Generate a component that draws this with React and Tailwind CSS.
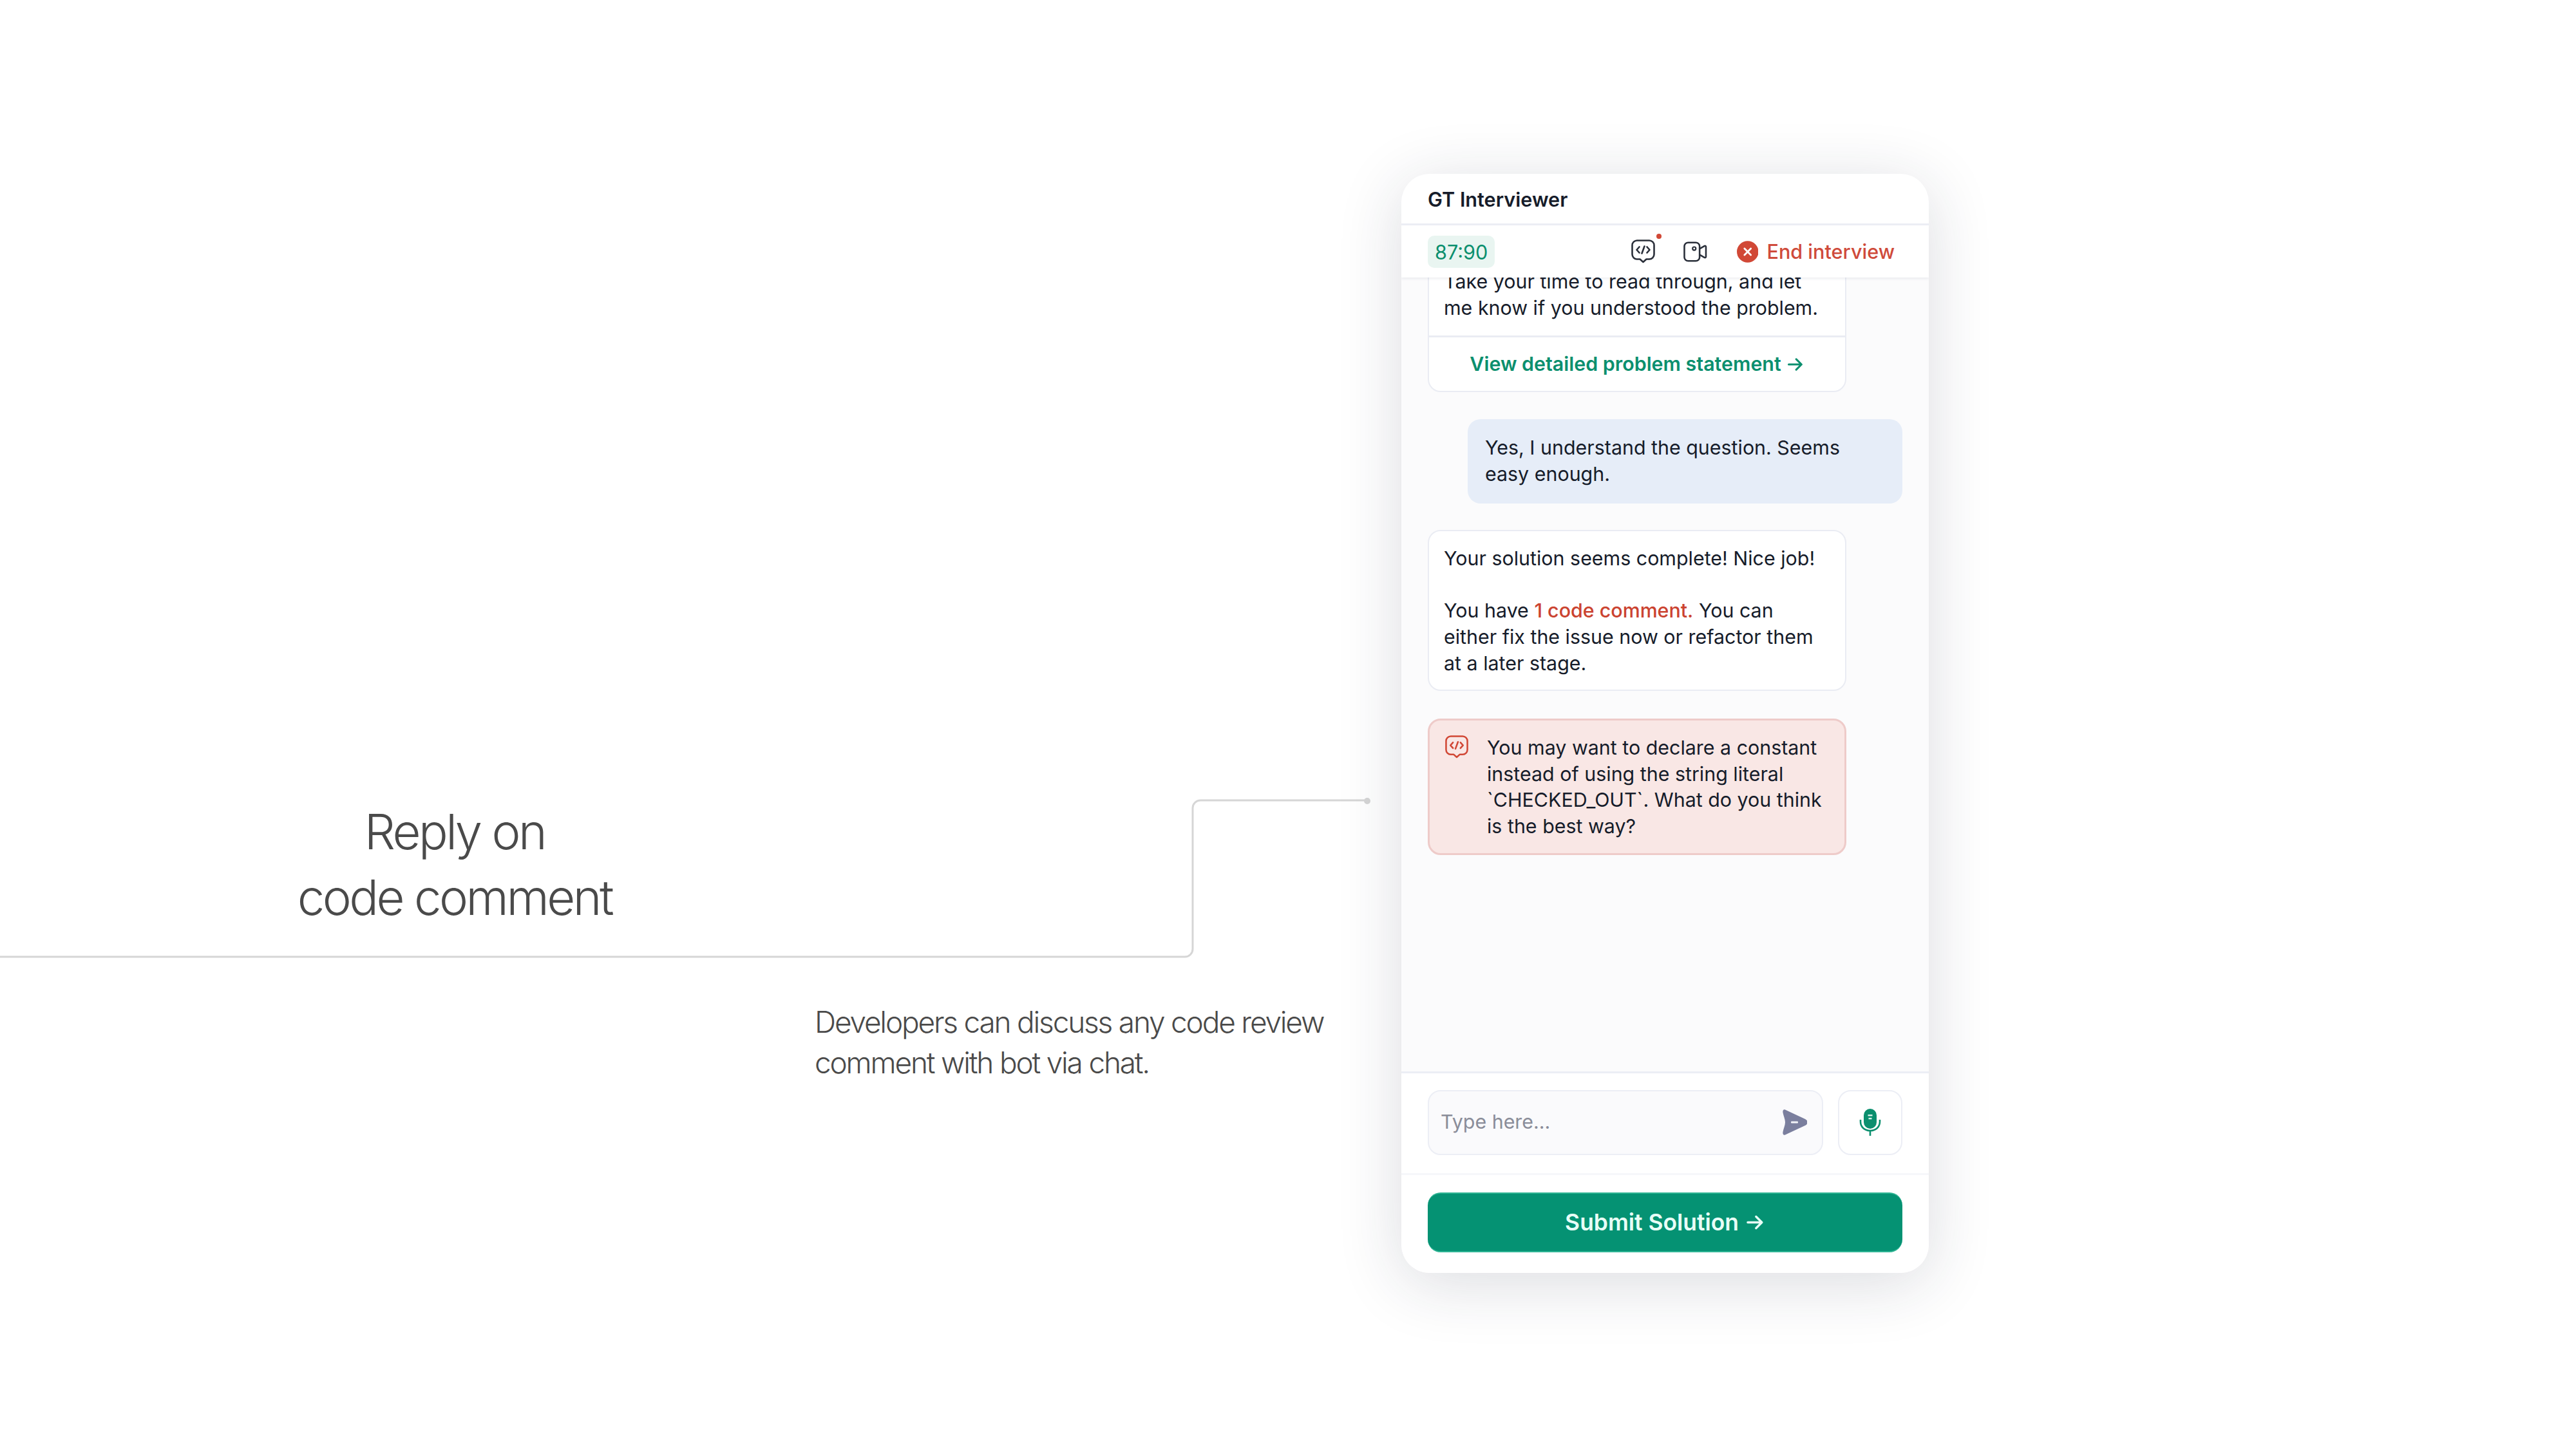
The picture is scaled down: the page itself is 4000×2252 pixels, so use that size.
const CodeBubble = ({ className, stroke }) => (
  <svg viewBox="0 0 37 37" fill="none" className={className}>
    <path d="M9 1.500h19a7.500 7.500 0 0 1 7.500 7.500v14a7.500 7.500 0 0 1-7.500 7.500h-4.500l-5 4.500-5-4.500H9A7.500 7.500 0 0 1 1.500 23V9A7.500 7.500 0 0 1 9 1.500Z" stroke={stroke} strokeWidth="2.600" strokeLinejoin="round" />
    <path d="M12.500 11.500 8.500 16l4 4.500M24.500 11.500l4 4.500-4 4.500M20.500 10.500l-4 11" stroke={stroke} strokeWidth="2.600" strokeLinecap="round" strokeLinejoin="round" />
  </svg>
);

const Arrow = ({ className }) => (
  <svg viewBox="0 0 24 24" fill="none" stroke="currentColor" strokeWidth="2.600" strokeLinecap="round" strokeLinejoin="round" className={className}>
    <path d="M3 12h17M13 5l7 7-7 7" />
  </svg>
);

export default function App() {
  return (
    <div className="relative flex h-[2252px] w-[4000px] overflow-hidden bg-white font-['Inter',sans-serif] text-[#161c2a]">
      <svg className="absolute left-0 top-0 h-[2252px] w-[2200px]" viewBox="0 0 2200 2252" fill="none">
        <path d="M0 1486H1840a12 12 0 0 0 12-12V1255a12 12 0 0 1 12-12H2122" stroke="#d6d6d6" strokeWidth="3" />
        <circle cx="2123" cy="1244" r="5" fill="#d6d6d6" />
      </svg>

      <div className="relative flex w-[2176px] shrink-0 flex-col">
        <div className="mt-[1240px] w-[1412px] text-center text-[76px] font-light leading-[102px] tracking-[-0.046em] text-[#4a4a4a]">
          Reply on
          <br />
          code comment
        </div>
        <div className="ml-[1265px] mt-[112px] whitespace-nowrap text-[46px] font-light leading-[63px] tracking-[-0.048em] text-[#4a4a4a]">
          Developers can discuss any code review
          <br />
          comment with bot via chat.
        </div>
      </div>

      <div className="relative mt-[270px] flex h-[1707px] w-[819px] shrink-0 flex-col overflow-hidden rounded-[44px] bg-white shadow-[0_16px_100px_rgba(30,40,60,0.16)]">
        <div className="flex h-[80px] shrink-0 items-center border-b-[3px] border-[#eceef5] pl-[41px] pt-[3px] text-[30.6px] font-semibold">
          GT Interviewer
        </div>

        <div className="relative z-10 flex h-[81px] shrink-0 items-center bg-white pl-[41px] pr-[53px] shadow-[0_2px_4px_rgba(30,40,80,0.08)]">
          <div className="flex h-[50px] w-[106px] items-center justify-center rounded-[10px] bg-[#e9f5f1] pt-[2px] text-[30.6px] text-[#0b8f6e]">
            87:90
          </div>
          <div className="relative ml-[212px] h-[37px] w-[37px]">
            <CodeBubble className="h-[37px] w-[37px]" stroke="#2a2f3a" />
            <div className="absolute -right-[10px] -top-[9px] h-[8px] w-[8px] rounded-full bg-[#d14836]" />
          </div>
          <svg viewBox="0 0 37 32" fill="none" className="ml-[44px] h-[32px] w-[37px]">
            <rect x="1.500" y="1.500" width="24" height="29" rx="6" stroke="#2a2f3a" strokeWidth="2.600" />
            <circle cx="17" cy="11" r="2.600" stroke="#2a2f3a" strokeWidth="2.200" />
            <path d="M26 11l7-4c1.500-.8 2.500 0 2.500 1.500v15c0 1.500-1 2.300-2.500 1.500l-7-4" stroke="#2a2f3a" strokeWidth="2.600" strokeLinejoin="round" />
          </svg>
          <svg viewBox="0 0 34 34" className="ml-[46px] h-[34px] w-[34px]">
            <circle cx="17" cy="17" r="17" fill="#d14836" />
            <path d="M12 12l10 10M22 12 12 22" stroke="#fff" strokeWidth="2.800" strokeLinecap="round" />
          </svg>
          <div className="ml-[13px] whitespace-nowrap text-[30.6px] font-medium text-[#cf4a3a]">End interview</div>
        </div>

        <div className="flex flex-1 flex-col overflow-hidden bg-[#fbfbfc] px-[41px] text-[30.4px] leading-[40.6px]">
          <div className="-mt-[31px] w-[650px] rounded-[20px] border-2 border-[#eaecf3] bg-white">
            <div className="whitespace-nowrap px-[23px] pb-[23px] pt-[15px]">
              Take your time to read through, and let
              <br />
              me know if you understood the problem.
            </div>
            <div className="flex h-[86px] items-center justify-center gap-[8px] border-t-[3px] border-[#eaecf3] text-[30.4px] font-semibold text-[#0b8f6e]">
              View detailed problem statement
              <Arrow className="h-[28px] w-[28px]" />
            </div>
          </div>

          <div className="ml-[62px] mt-[42px] h-[131px] w-[675px] whitespace-nowrap rounded-[20px] bg-[#e6edf8] pl-[27px] pt-[24px]">
            Yes, I understand the question. Seems
            <br />
            easy enough.
          </div>

          <div className="mt-[41px] h-[250px] w-[650px] whitespace-nowrap rounded-[20px] border-2 border-[#eaecf3] bg-white pl-[23px] pt-[22px]">
            Your solution seems complete! Nice job!
            <br />
            <br />
            You have <span className="font-medium text-[#cb4330]">1 code comment.</span> You can
            <br />
            either fix the issue now or refactor them
            <br />
            at a later stage.
          </div>

          <div className="mt-[43px] flex h-[212px] w-[650px] rounded-[20px] border-[3px] border-[#eecbc9] bg-[#f9e7e5] pl-[24px] pt-[22px]">
            <CodeBubble className="mt-[1px] h-[36px] w-[36px] shrink-0" stroke="#d14836" />
            <div className="ml-[29px] whitespace-nowrap">
              You may want to declare a constant
              <br />
              instead of using the string literal
              <br />
              `CHECKED_OUT`. What do you think
              <br />
              is the best way?
            </div>
          </div>
        </div>

        <div className="flex h-[161px] shrink-0 items-center gap-[23px] border-y-[3px] border-t-[#eceef5] border-b-[#f6f7fa] bg-white px-[41px] pb-[3px]">
          <div className="flex h-[101px] w-[614px] items-center justify-between rounded-[20px] border-2 border-[#eceef5] bg-[#fafafc] pl-[18px] pr-[23px] text-[30.4px] text-[#8a8d99]">
            Type here...
            <svg viewBox="0 0 38 40" className="h-[40px] w-[38px]">
              <path d="M4 0.500 35 15c5 2.500 5 7.500 0 10L4 39.500C1 40.500 0 38 0.500 35c.8-5 3.500-10 3.500-15S1.300 10 .500 5C0 2 1 -0.500 4 .500Z" fill="#7b7f9e" />
              <rect x="13" y="18.500" width="11" height="3" rx="1" fill="#f2f3f7" />
            </svg>
          </div>
          <div className="flex h-[101px] w-[100px] items-center justify-center rounded-[20px] border-2 border-[#eceef5] bg-white">
            <svg viewBox="0 0 34 42" fill="none" className="h-[42px] w-[34px]">
              <rect x="7" y="0" width="20" height="31" rx="10" fill="#0b8f6e" />
              <rect x="13.500" y="9" width="7" height="2.400" fill="#d8f2ea" />
              <rect x="14.500" y="14" width="5" height="2.400" fill="#d8f2ea" />
              <path d="M2 17v3c0 8.500 6.500 14 15 14s15-5.500 15-14v-3M17 34v8" stroke="#0b8f6e" strokeWidth="2.600" />
            </svg>
          </div>
        </div>

        <div className="h-[152px] shrink-0 bg-white px-[41px] pt-[27px]">
          <div className="flex h-[93px] items-center justify-center gap-[10px] rounded-[20px] border-y-2 border-y-[#2fb594] bg-[#059273] text-[35.4px] font-semibold text-[#e8fff7]">
            Submit Solution
            <Arrow className="h-[31px] w-[31px]" />
          </div>
        </div>
      </div>
    </div>
  );
}
